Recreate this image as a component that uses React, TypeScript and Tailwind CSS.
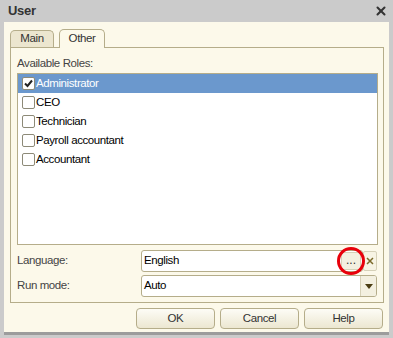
import { X } from "lucide-react";

const roles = [
  { name: "Administrator", checked: true },
  { name: "CEO", checked: false },
  { name: "Technician", checked: false },
  { name: "Payroll accountant", checked: false },
  { name: "Accountant", checked: false },
];

function Checkbox({ checked }: { checked: boolean }) {
  return (
    <span className="flex h-[13px] w-[13px] shrink-0 items-center justify-center rounded-[2px] border border-[#8d8a78] bg-white">
      {checked && (
        <svg width="9" height="9" viewBox="0 0 9 9">
          <path d="M1 4.5 L3.5 7 L8 1.5" stroke="#222" strokeWidth="2" fill="none" />
        </svg>
      )}
    </span>
  );
}

export default function App() {
  return (
    <div
      className="h-[338px] w-[393px] bg-[#cbcbcb] px-[4px] text-[11.5px] tracking-[-0.4px] text-[#3a3a3a]"
      style={{ fontFamily: '"Liberation Sans", Arial, sans-serif' }}
    >
      {/* title bar */}
      <div className="flex h-[22px] items-center justify-between pl-[4px] pr-[1px]">
        <span className="text-[13px] font-bold tracking-[-0.3px] text-[#333]">User</span>
        <X className="h-[14px] w-[14px] text-[#333]" strokeWidth={3.5} />
      </div>

      <div className="flex h-[313px] flex-col border-b-[3px] border-[#9c9c9c] bg-[#fcf9ea] px-[6px] pt-[6px]">
        {/* tabs */}
        <div className="flex items-end gap-[5px]">
          <div className="flex h-[17px] w-[44px] items-center justify-center rounded-t-[5px] border border-b-0 border-[#b5ad8a] bg-[#ece6cf] text-[#333]">
            Main
          </div>
          <div className="relative top-[1px] flex h-[19px] w-[46px] items-center justify-center rounded-t-[5px] border border-b-0 border-[#b5ad8a] bg-[#fcf9ea] text-[#333]">
            Other
          </div>
        </div>

        {/* tab panel */}
        <div className="flex h-[256px] w-[374px] flex-col border border-[#b5ad8a] px-[6px] pt-[8px]">
          <div className="h-[17px] leading-[14px] text-[#444]">Available Roles:</div>
          <div className="h-[172px] w-[361px] border border-[#b5ad8a] bg-white">
            {roles.map((r, i) => (
              <div
                key={r.name}
                className={`flex h-[19px] items-center gap-[1px] pl-[4px] ${
                  i === 0 ? "bg-[#6b98cd] text-white" : "text-black"
                }`}
              >
                <Checkbox checked={r.checked} />
                <span>{r.name}</span>
              </div>
            ))}
          </div>

          <div className="mt-[5px] flex h-[22px] items-center">
            <span className="w-[124px] text-[#444]">Language:</span>
            <div className="flex h-[22px] w-[222px] items-center rounded-[3px] border border-[#b5ad8a] bg-white pl-[2px] pr-[1px] text-black">
              <span className="flex-1">English</span>
              <span className="relative flex h-[18px] w-[20px] items-end justify-center rounded-[2px] border border-[#d6d1b8] bg-[#f3f0e0] pb-[3px] text-[12px] leading-none tracking-normal text-[#333]">
                ...
                <span className="absolute left-1/2 top-1/2 h-[28px] w-[28px] -translate-x-1/2 -translate-y-1/2 rounded-full border-[3px] border-[#e8000b]" />
              </span>
            </div>
            <span className="flex h-[20px] w-[14px] items-center justify-center rounded-[2px] border border-[#d6d1b8] bg-[#f7f4e4]">
              <svg width="8" height="8" viewBox="0 0 8 8">
                <path d="M1 1 L7 7 M7 1 L1 7" stroke="#7b6a2a" strokeWidth="1.5" />
              </svg>
            </span>
          </div>

          <div className="mt-[3px] flex h-[22px] items-center">
            <span className="w-[124px] text-[#444]">Run mode:</span>
            <div className="flex h-[22px] w-[236px] items-center rounded-[3px] border border-[#b5ad8a] bg-white pl-[2px] text-black">
              <span className="flex-1">Auto</span>
              <span className="flex h-[20px] w-[16px] items-center justify-center rounded-r-[2px] border-l border-[#d6d1b8] bg-[#f3f0e0]">
                <svg width="8" height="5" viewBox="0 0 8 5">
                  <path d="M0 0 H8 L4 5 Z" fill="#4a3d12" />
                </svg>
              </span>
            </div>
          </div>
        </div>

        {/* buttons */}
        <div className="mt-[5px] flex justify-end gap-[5px]">
          {["OK", "Cancel", "Help"].map((b) => (
            <button
              key={b}
              className="flex h-[21px] w-[79px] items-center justify-center rounded-[4px] border border-[#b5ad8a] bg-gradient-to-b from-[#fdfcf6] to-[#ece7d1] text-[#333]"
            >
              {b}
            </button>
          ))}
        </div>
      </div>
    </div>
  );
}
